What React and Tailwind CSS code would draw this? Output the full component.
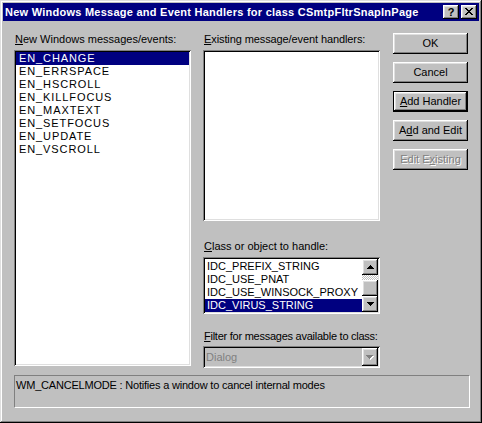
import React from "react";

const raised =
  "shadow-[inset_-1px_-1px_#000,inset_1px_1px_#fff,inset_-2px_-2px_#808080,inset_2px_2px_#dfdfdf]";
const sunken =
  "shadow-[inset_1px_1px_#808080,inset_-1px_-1px_#fff,inset_2px_2px_#000,inset_-2px_-2px_#dfdfdf]";

const messages = [
  "EN_CHANGE",
  "EN_ERRSPACE",
  "EN_HSCROLL",
  "EN_KILLFOCUS",
  "EN_MAXTEXT",
  "EN_SETFOCUS",
  "EN_UPDATE",
  "EN_VSCROLL",
];

const classes = ["IDC_PREFIX_STRING", "IDC_USE_PNAT", "IDC_USE_WINSOCK_PROXY", "IDC_VIRUS_STRING"];

function Arrow({ down }) {
  return (
    <svg width="7" height="4" viewBox="0 0 7 4" className="block" shapeRendering="crispEdges">
      {down ? <path d="M0 0h7L3.5 4z" fill="#000" /> : <path d="M0 4h7L3.5 0z" fill="#000" />}
    </svg>
  );
}

function Label({ children, className = "" }) {
  return (
    <div className={"h-[13px] leading-[13px] pl-[1px] whitespace-nowrap " + className}>{children}</div>
  );
}

function Button({ children, isDefault, disabled }) {
  if (isDefault) {
    return (
      <div className="h-[21px] border border-black">
        <div className={"h-full flex items-center justify-center " + raised}>{children}</div>
      </div>
    );
  }
  return (
    <div
      className={
        "h-[21px] flex items-center justify-center " +
        raised +
        (disabled ? " text-[#808080] [text-shadow:1px_1px_#fff]" : "")
      }
    >
      {children}
    </div>
  );
}

export default function App() {
  return (
    <div className="w-[482px] h-[423px] bg-[#c0c0c0] p-[3px] text-[11px] leading-[13px] text-black font-['Liberation_Sans',Arial,sans-serif] shadow-[inset_-1px_-1px_#000,inset_1px_1px_#dfdfdf,inset_-2px_-2px_#808080,inset_2px_2px_#fff]">
      {/* Title bar */}
      <div className="h-[18px] bg-[#000080] flex items-center justify-between pl-[2px] pr-[2px]">
        <span className="text-white font-bold leading-[18px] tracking-[0.25px] whitespace-nowrap overflow-hidden">
          New Windows Message and Event Handlers for class CSmtpFltrSnapInPage
        </span>
        <div className="flex gap-[2px] shrink-0">
          <div className={"w-[16px] h-[14px] bg-[#c0c0c0] flex items-center justify-center font-bold text-[11px] leading-[14px] pb-[1px] " + raised}>
            ?
          </div>
          <div className={"w-[16px] h-[14px] bg-[#c0c0c0] flex items-center justify-center pb-[1px] " + raised}>
            <svg width="8" height="7" viewBox="0 0 8 7" shapeRendering="crispEdges">
              <path d="M0 0h2v1h1v1h2V1h1V0h2v1H7v1H6v1H5v1h1v1h1v1h1v1H6V6H5V5H3v1H2v1H0V6h1V5h1V4h1V3H2V2H1V1H0z" fill="#000" />
            </svg>
          </div>
        </div>
      </div>

      <div className="flex pl-[11px] pt-[12px]">
        {/* Left column */}
        <div className="w-[177px]">
          <Label>
            <u>N</u>ew Windows messages/events:
          </Label>
          <div className={"mt-[4px] h-[316px] bg-white p-[2px] " + sunken}>
            {messages.map((m, i) => (
              <div
                key={m}
                className={
                  "h-[13px] leading-[13px] pl-[3px] tracking-[0.9px] " +
                  (i === 0 ? "bg-[#000080] text-white" : "")
                }
              >
                {m}
              </div>
            ))}
          </div>
        </div>

        {/* Middle column */}
        <div className="w-[177px] ml-[12px]">
          <Label className="tracking-[-0.1px]">
            <u>E</u>xisting message/event handlers:
          </Label>
          <div className={"mt-[4px] h-[171px] bg-white " + sunken}></div>

          <Label className="mt-[19px]">
            <u>C</u>lass or object to handle:
          </Label>
          <div className={"mt-[4px] h-[57px] bg-white p-[2px] flex " + sunken}>
            <div className="flex-1 pt-[1px]">
              {classes.map((c, i) => (
                <div
                  key={c}
                  className={
                    "h-[13px] leading-[13px] pl-[2px] whitespace-nowrap " +
                    (i === classes.length - 1 ? "bg-[#000080] text-white" : "")
                  }
                >
                  {c}
                </div>
              ))}
            </div>
            <div className="w-[16px] flex flex-col">
              <div className={"h-[16px] bg-[#c0c0c0] flex items-center justify-center " + raised}>
                <Arrow />
              </div>
              <div className="h-[5px] bg-[repeating-conic-gradient(#fff_0_25%,#c0c0c0_0_50%)] bg-[length:2px_2px]"></div>
              <div className={"h-[16px] bg-[#c0c0c0] " + raised}></div>
              <div className={"h-[16px] bg-[#c0c0c0] flex items-center justify-center " + raised}>
                <Arrow down />
              </div>
            </div>
          </div>

          <Label className="mt-[16px] tracking-[-0.25px]">
            <u>F</u>ilter for messages available to class:
          </Label>
          <div className={"mt-[3px] h-[22px] bg-[#c0c0c0] p-[2px] flex items-center " + sunken}>
            <span className="flex-1 pl-[1px] text-[#808080]">Dialog</span>
            <div className={"w-[16px] h-[18px] bg-[#c0c0c0] flex items-center justify-center " + raised}>
              <svg width="8" height="5" viewBox="0 0 8 5" shapeRendering="crispEdges">
                <path d="M1 1h7L4.5 5z" fill="#fff" />
                <path d="M0 0h7L3.5 4z" fill="#808080" />
              </svg>
            </div>
          </div>
        </div>

        {/* Buttons */}
        <div className="w-[75px] ml-[13px] flex flex-col gap-[8px]">
          <Button>OK</Button>
          <Button>Cancel</Button>
          <Button isDefault>
            <span>
              <u>A</u>dd Handler
            </span>
          </Button>
          <Button>
            <span>
              A<u>d</u>d and Edit
            </span>
          </Button>
          <Button disabled>
            <span>
              Edit E<u>x</u>isting
            </span>
          </Button>
        </div>
      </div>

      {/* Description */}
      <div className="ml-[11px] mt-[7px] w-[456px] h-[33px] border border-t-[#808080] border-l-[#808080] border-b-white border-r-white pl-[1px] pt-[3px] tracking-[-0.2px]">
        WM_CANCELMODE : Notifies a window to cancel internal modes
      </div>
    </div>
  );
}
